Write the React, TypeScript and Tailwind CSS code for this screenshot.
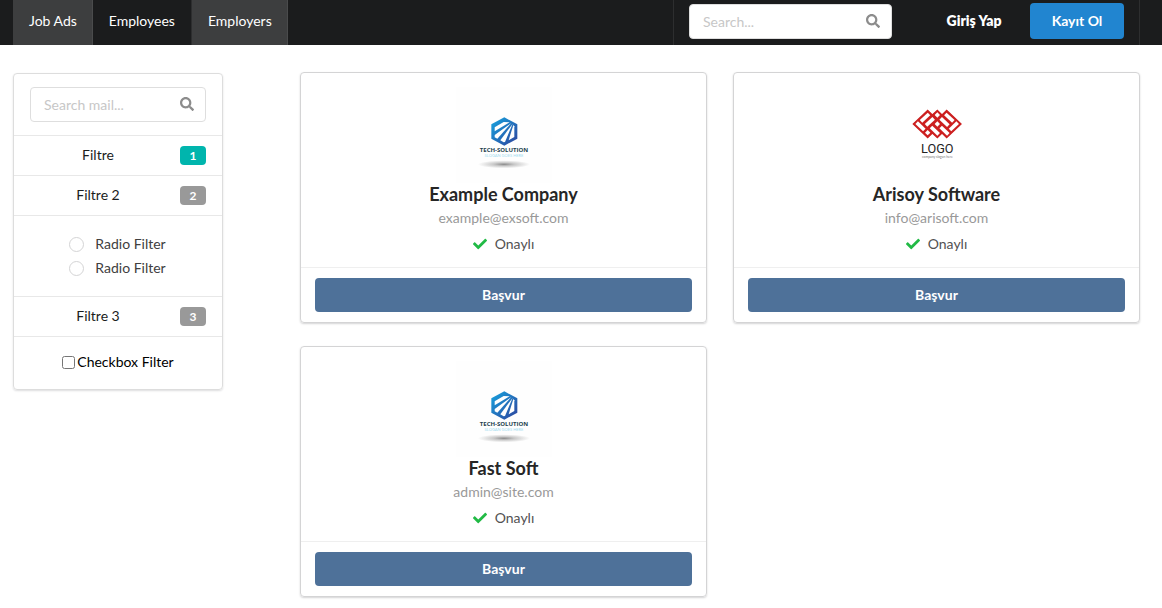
import { FaCheck, FaSearch } from "react-icons/fa";

function TechLogo() {
  return (
    <svg viewBox="0 0 288 288" className="h-24 w-24" role="img" aria-label="Tech-Solution">
      <defs>
        <linearGradient id="hex" x1="0" y1="0" x2="1" y2="1">
          <stop offset="0" stopColor="#16a5e0" />
          <stop offset="1" stopColor="#2f429c" />
        </linearGradient>
        <radialGradient id="shade">
          <stop offset="0" stopColor="#8c8c8c" />
          <stop offset="0.4" stopColor="#c9c9c9" />
          <stop offset="1" stopColor="#fefefe" />
        </radialGradient>
      </defs>
      <rect width="288" height="288" fill="#fefefe" />
      <path d="M145 91 184 112V155L145 176 106 155V112Z" fill="url(#hex)" />
      <g fill="#fff">
        <path d="M116 121 143 105 161 106 116 133Z" />
        <path d="M116 144 166 108 124 155 116 151Z" />
        <path d="M133 160 170 110 147 165 143 166Z" />
        <path d="M158 160 172 114 175 118V150Z" />
      </g>
      <text x="144" y="195" textAnchor="middle" fontFamily="Open Sans, sans-serif" fontWeight="700" fontSize="18" fill="#1d3f4f">TECH-SOLUTION</text>
      <text x="144" y="210" textAnchor="middle" fontFamily="Lato, sans-serif" fontSize="12" fill="#9fdcf0">SLOGAN GOES HERE</text>
      <ellipse cx="144" cy="232" rx="78" ry="12" fill="url(#shade)" />
    </svg>
  );
}

function WeaveLogo() {
  return (
    <svg viewBox="0 0 288 288" className="h-24 w-24" role="img" aria-label="Logo">
      <path d="M73 111 116 70 130 84 145 70 159 84 173 70 216 111 173 152 159 138 145 152 130 138 116 152Z" fill="#cc1f1f" stroke="#cc1f1f" strokeWidth="4" />
      <g stroke="#ffffff" strokeWidth="11" fill="none">
        <path d="M96 103 120 81" />
        <path d="M111 115 134 94" />
        <path d="M83 107 106 129" />
        <path d="M126 120 149 142" />
        <path d="M155 94 178 116" />
        <path d="M169 81 193 103" />
        <path d="M206 107 183 129" />
        <path d="M178 142 155 120" />
      </g>
      <g fill="#ffffff">
        <path d="M145 76 153 84 145 92 137 84Z" />
        <path d="M145 103 153 111 145 119 137 111Z" />
        <path d="M116 129 124 137 116 145 108 137Z" />
      </g>
      <text x="145" y="197" textAnchor="middle" fontFamily="Roboto, sans-serif" fontWeight="400" fontSize="38" fill="#222222">LOGO</text>
      <text x="145" y="214" textAnchor="middle" fontFamily="Lato, sans-serif" fontSize="10" fill="#777777">company slogan here</text>
    </svg>
  );
}

const companies = [
  { name: "Example Company", mail: "example@exsoft.com", Logo: TechLogo },
  { name: "Arisoy Software", mail: "info@arisoft.com", Logo: WeaveLogo },
  { name: "Fast Soft", mail: "admin@site.com", Logo: TechLogo },
];

function SearchBox({ label }: { label: string }) {
  return (
    <div className="relative w-full">
      <input
        type="text"
        aria-label={label}
        placeholder={label}
        className="block h-[35px] w-full rounded border border-[#dedede] bg-white pr-9 pl-[13px] text-sm text-[#1b1c1d] outline-none placeholder:text-[#c7c7c7]"
      />
      <FaSearch className="pointer-events-none absolute top-2.5 right-3 size-3.5 text-[#8c8c8c]" />
    </div>
  );
}

function FilterLink({ name, count, tone }: { name: string; count: number; tone: string }) {
  return (
    <a href="#" className="flex h-10 items-center gap-3.5 border-t border-[#e8e8e8] px-4">
      <span className="flex-1 pb-0.5 text-center">{name}</span>
      <span className={`flex h-[19px] w-[26px] items-center justify-center rounded text-xs font-bold text-white ${tone}`}>{count}</span>
    </a>
  );
}

function Sidebar() {
  return (
    <aside className="mt-px w-[210px] shrink-0 rounded border border-[#dddddd] text-sm text-[#1b1c1d] shadow-[0_1px_2px_rgba(34,36,38,0.15)]">
      <div className="px-4 py-[13px]">
        <SearchBox label="Search mail..." />
      </div>
      <FilterLink name="Filtre" count={1} tone="bg-[#00b5ad]" />
      <FilterLink name="Filtre 2" count={2} tone="bg-[#999999]" />
      <div className="flex flex-col items-center border-t border-[#e8e8e8] py-4">
        {["a", "b"].map((id) => (
          <label key={id} className="flex h-6 items-center gap-[11px] pr-px text-[#404040]">
            <input type="radio" name="radio-filter" value={id} className="size-[15px] appearance-none rounded-full border border-[#d4d4d5] bg-white checked:border-[5px] checked:border-[#555555]" />
            Radio Filter
          </label>
        ))}
      </div>
      <FilterLink name="Filtre 3" count={3} tone="bg-[#999999]" />
      <div className="flex h-[53px] items-center justify-center border-t border-[#e8e8e8] pb-0.5">
        <label className="flex items-center gap-0.5 text-black">
          <input type="checkbox" className="size-[13px]" />
          Checkbox Filter
        </label>
      </div>
    </aside>
  );
}

function Header() {
  return (
    <header className="flex h-[45px] bg-[#1b1c1d] pr-[22px] pl-[13px] text-sm text-white">
      <nav className="flex">
        <a href="#" className="flex items-center border-r border-[#4a4b4c] bg-[#3d3e3f] pr-[15px] pb-[3px] pl-4">Job Ads</a>
        <a href="#" className="flex items-center border-r border-[#2d2e2f] px-4 pb-[3px]">Employees</a>
        <a href="#" className="flex items-center border-r border-[#4a4b4c] bg-[#3d3e3f] pr-[15px] pb-[3px] pl-4">Employers</a>
      </nav>
      <div className="ml-auto flex items-center border-x border-[#2d2e2f] px-[15px] pb-[3px]">
        <div className="w-[203px]">
          <SearchBox label="Search..." />
        </div>
        <button type="button" className="ml-8 h-9 w-[100px] font-extrabold">Giriş Yap</button>
        <button type="button" className="ml-1.5 h-9 w-[94px] rounded bg-[#2185d0] font-bold">Kayıt Ol</button>
      </div>
    </header>
  );
}

export default function App() {
  return (
    <div className="min-h-screen bg-white font-['Lato',sans-serif]">
      <Header />
      <div className="flex items-start gap-[77px] pt-[27px] pr-[22px] pb-[11px] pl-[13px]">
        <Sidebar />
        <main className="grid flex-1 grid-cols-2 gap-x-[26px] gap-y-[23px]">
          {companies.map(({ name, mail, Logo }) => (
            <article key={name} className="rounded border border-[#d4d4d5] shadow-[0_1px_2px_#d4d4d5]">
              <div className="flex flex-col items-center px-3.5 pt-3.5 pb-[13px] text-sm leading-5">
                <Logo />
                <h2 className="text-lg leading-[22px] font-bold text-[#262626]">{name}</h2>
                <p className="mt-[3px] text-[#999999]">{mail}</p>
                <p className="mt-1.5 flex items-center gap-2 text-[#525252]">
                  <FaCheck className="size-3.5 text-[#21ba45]" />
                  Onaylı
                </p>
              </div>
              <div className="border-t border-[#efefef] px-3.5 py-2.5">
                <button type="button" className="block h-[34px] w-full rounded bg-[#4e7199] text-sm font-bold text-white">Başvur</button>
              </div>
            </article>
          ))}
        </main>
      </div>
    </div>
  );
}
